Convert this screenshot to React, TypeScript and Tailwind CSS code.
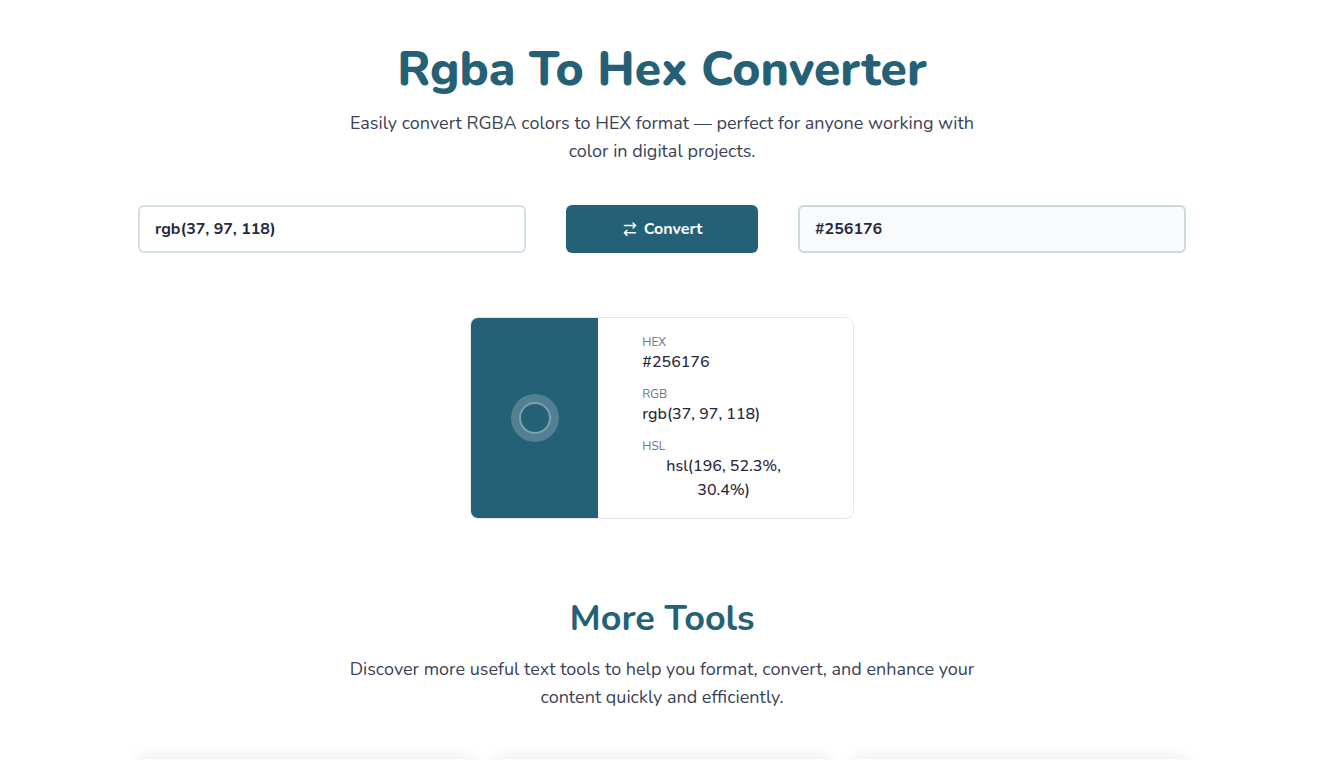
import React, { useState } from 'react';

const parseRgb = (value: string): number[] | null => {
  const parts = value.match(/\d+(\.\d+)?/g);
  if (!parts || parts.length < 3) return null;
  return parts.slice(0, 3).map((n) => Math.min(255, Math.round(Number(n))));
};

const toHex = (rgb: number[]) =>
  '#' + rgb.map((n) => n.toString(16).padStart(2, '0')).join('').toUpperCase();

const toHsl = (rgb: number[]) => {
  const [r, g, b] = rgb.map((n) => n / 255);
  const max = Math.max(r, g, b);
  const min = Math.min(r, g, b);
  const d = max - min;
  const l = (max + min) / 2;
  const s = d === 0 ? 0 : d / (1 - Math.abs(2 * l - 1));
  let h = 0;
  if (d !== 0) {
    if (max === r) h = ((g - b) / d + 6) % 6;
    else if (max === g) h = (b - r) / d + 2;
    else h = (r - g) / d + 4;
  }
  return `hsl(${Math.round(h * 60)}, ${(s * 100).toFixed(1)}%, ${(l * 100).toFixed(1)}%)`;
};

const ConvertIcon: React.FC = () => (
  <svg className="h-4 w-4" viewBox="0 0 16 16" fill="none" stroke="currentColor" strokeWidth={1.4} strokeLinecap="round" strokeLinejoin="round" aria-hidden="true">
    <path d="M2.4 4.5h11.2M11 1.9l2.6 2.6L11 7.1" />
    <path d="M13.6 11.8H2.4M5 9.2l-2.6 2.6L5 14.4" />
  </svg>
);

const App: React.FC = () => {
  const [input, setInput] = useState('rgb(37, 97, 118)');
  const [color, setColor] = useState<number[]>([37, 97, 118]);

  const handleConvert = () => {
    const rgb = parseRgb(input);
    if (rgb) setColor(rgb);
  };

  const hex = toHex(color);
  const formats = [
    { label: 'HEX', value: hex },
    { label: 'RGB', value: `rgb(${color.join(', ')})` },
    { label: 'HSL', value: toHsl(color) },
  ];

  return (
    <div className="bg-white pr-[9px] font-['Nunito','Nunito_Sans','Noto_Sans',sans-serif] text-[#28283a]">
      <main className="mx-auto max-w-[1080px] px-4 pt-[45px]">
        <header className="mx-auto max-w-[640px] text-center">
          <h1 className="mb-4 text-5xl font-extrabold text-[#256176]">Rgba To Hex Converter</h1>
          <p className="text-lg text-[#3b4256]">
            Easily convert RGBA colors to HEX format — perfect for anyone working with color in digital projects.
          </p>
        </header>

        <div className="mt-10 grid gap-10 md:grid-cols-[1fr_192px_1fr]">
          <input
            type="text"
            aria-label="RGBA color"
            className="h-12 w-full rounded-md border-2 border-[#d2dfe5] bg-white px-[15px] font-bold focus:outline-none"
            value={input}
            onChange={(e) => setInput(e.target.value)}
          />
          <button
            className="flex h-12 items-center justify-center gap-[6px] rounded-md bg-[#256176] font-bold text-white"
            onClick={handleConvert}
          >
            <ConvertIcon />
            Convert
          </button>
          <input
            type="text"
            aria-label="HEX color"
            className="h-12 w-full rounded-md border-2 border-[#ccdadf] bg-[#f9fafc] px-[15px] font-bold focus:outline-none"
            value={hex}
            readOnly
          />
        </div>

        <div className="mx-auto mt-16 flex max-w-sm overflow-hidden rounded-lg border border-gray-200">
          <div className="flex w-1/3 items-center justify-center" style={{ backgroundColor: hex }}>
            <div className="flex h-12 w-12 items-center justify-center rounded-full bg-white/20">
              <div className="h-8 w-8 rounded-full border-2 border-[#7ca0ad]" style={{ backgroundColor: hex }} />
            </div>
          </div>
          <div className="flex w-2/3 flex-col items-start gap-3 py-4 pr-12 pl-11">
            {formats.map((format) => (
              <div key={format.label}>
                <div className="text-xs text-[#6b7280]">{format.label}</div>
                <button className="text-center font-medium" onClick={() => navigator.clipboard?.writeText(format.value)}>
                  {format.value}
                </button>
              </div>
            ))}
          </div>
        </div>

        <section className="mt-20">
          <div className="mx-auto max-w-[640px] text-center">
            <h2 className="mb-4 text-4xl font-bold text-[#256176]">More Tools</h2>
            <p className="text-lg text-[#3b4256]">
              Discover more useful text tools to help you format, convert, and enhance your content quickly and efficiently.
            </p>
          </div>
          <div className="mt-12 grid grid-cols-3 gap-6">
            {[0, 1, 2].map((card) => (
              <div key={card} className="h-40 rounded-lg bg-white shadow-[0_0_20px_rgba(0,0,0,0.1)]" />
            ))}
          </div>
        </section>
      </main>
    </div>
  );
};

export default App;
